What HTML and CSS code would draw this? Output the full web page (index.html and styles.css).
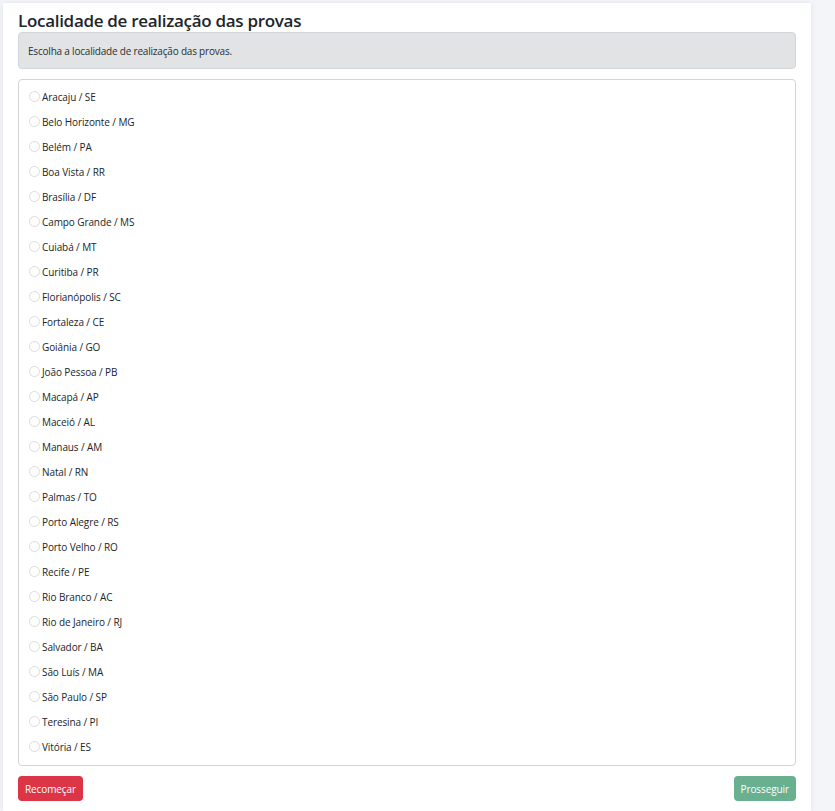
FILE: index.html
```html
<!DOCTYPE html>
<html lang="pt-BR">
<head>
<meta charset="utf-8">
<title>Localidade</title>
<link rel="stylesheet" href="styles.css">
</head>
<body>
<div class="page">
  <main class="card">
    <h1 class="title">Localidade de realização das provas</h1>
    <div class="alert">Escolha a localidade de realização das provas.</div>
    <div class="options">
      <label class="opt"><span class="radio"></span>Aracaju / SE</label>
      <label class="opt"><span class="radio"></span>Belo Horizonte / MG</label>
      <label class="opt"><span class="radio"></span>Belém / PA</label>
      <label class="opt"><span class="radio"></span>Boa Vista / RR</label>
      <label class="opt"><span class="radio"></span>Brasília / DF</label>
      <label class="opt"><span class="radio"></span>Campo Grande / MS</label>
      <label class="opt"><span class="radio"></span>Cuiabá / MT</label>
      <label class="opt"><span class="radio"></span>Curitiba / PR</label>
      <label class="opt"><span class="radio"></span>Florianópolis / SC</label>
      <label class="opt"><span class="radio"></span>Fortaleza / CE</label>
      <label class="opt"><span class="radio"></span>Goiânia / GO</label>
      <label class="opt"><span class="radio"></span>João Pessoa / PB</label>
      <label class="opt"><span class="radio"></span>Macapá / AP</label>
      <label class="opt"><span class="radio"></span>Maceió / AL</label>
      <label class="opt"><span class="radio"></span>Manaus / AM</label>
      <label class="opt"><span class="radio"></span>Natal / RN</label>
      <label class="opt"><span class="radio"></span>Palmas / TO</label>
      <label class="opt"><span class="radio"></span>Porto Alegre / RS</label>
      <label class="opt"><span class="radio"></span>Porto Velho / RO</label>
      <label class="opt"><span class="radio"></span>Recife / PE</label>
      <label class="opt"><span class="radio"></span>Rio Branco / AC</label>
      <label class="opt"><span class="radio"></span>Rio de Janeiro / RJ</label>
      <label class="opt"><span class="radio"></span>Salvador / BA</label>
      <label class="opt"><span class="radio"></span>São Luís / MA</label>
      <label class="opt"><span class="radio"></span>São Paulo / SP</label>
      <label class="opt"><span class="radio"></span>Teresina / PI</label>
      <label class="opt"><span class="radio"></span>Vitória / ES</label>
    </div>
    <div class="actions">
      <button class="btn btn-danger">Recomeçar</button>
      <button class="btn btn-success" disabled>Prosseguir</button>
    </div>
  </main>
</div>
</body>
</html>
```
FILE: styles.css
```css
html, body {
  margin: 0;
  padding: 0;
}
body {
  background: #f4f5f8;
  font-family: "Open Sans", "Noto Sans", sans-serif;
  color: #212529;
}
.page {
  padding: 3px 0 0 3px;
}
.card {
  width: 808px;
  min-height: 808px;
  box-sizing: border-box;
  background: #fff;
  padding: 6px 15px 0 15px;
  box-shadow: 0 0 6px rgba(0, 0, 0, 0.08);
}
.title {
  margin: 0;
  font-size: 17px;
  font-weight: 600;
  line-height: 23px;
  letter-spacing: -0.3px;
}
.alert {
  background: #e2e3e5;
  border: 1px solid #d3d6d8;
  border-radius: 4px;
  padding: 0 9px;
  height: 35px;
  display: flex;
  align-items: center;
  font-size: 10px;
  letter-spacing: -0.2px;
  color: #2b2f32;
}
.options {
  margin-top: 10px;
  border: 1px solid #d4d4d4;
  border-radius: 4px;
  padding: 4px 10px 6px 10px;
  display: flex;
  flex-direction: column;
}
.opt {
  display: flex;
  align-items: center;
  height: 25px;
  font-size: 10px;
  letter-spacing: -0.1px;
  color: #212529;
}
.radio {
  width: 9px;
  height: 9px;
  border: 1px solid #dcdcdc;
  border-radius: 50%;
  margin-right: 2px;
  flex: none;
}
.actions {
  margin-top: 10px;
  display: flex;
  justify-content: space-between;
}
.btn {
  font-family: inherit;
  font-size: 10px;
  letter-spacing: -0.1px;
  color: #fff;
  border: 0;
  border-radius: 4px;
  height: 25px;
  padding: 0 7px;
}
.btn-danger {
  background: #dc3545;
}
.btn-success {
  background: #198754;
  opacity: 0.65;
}
```
